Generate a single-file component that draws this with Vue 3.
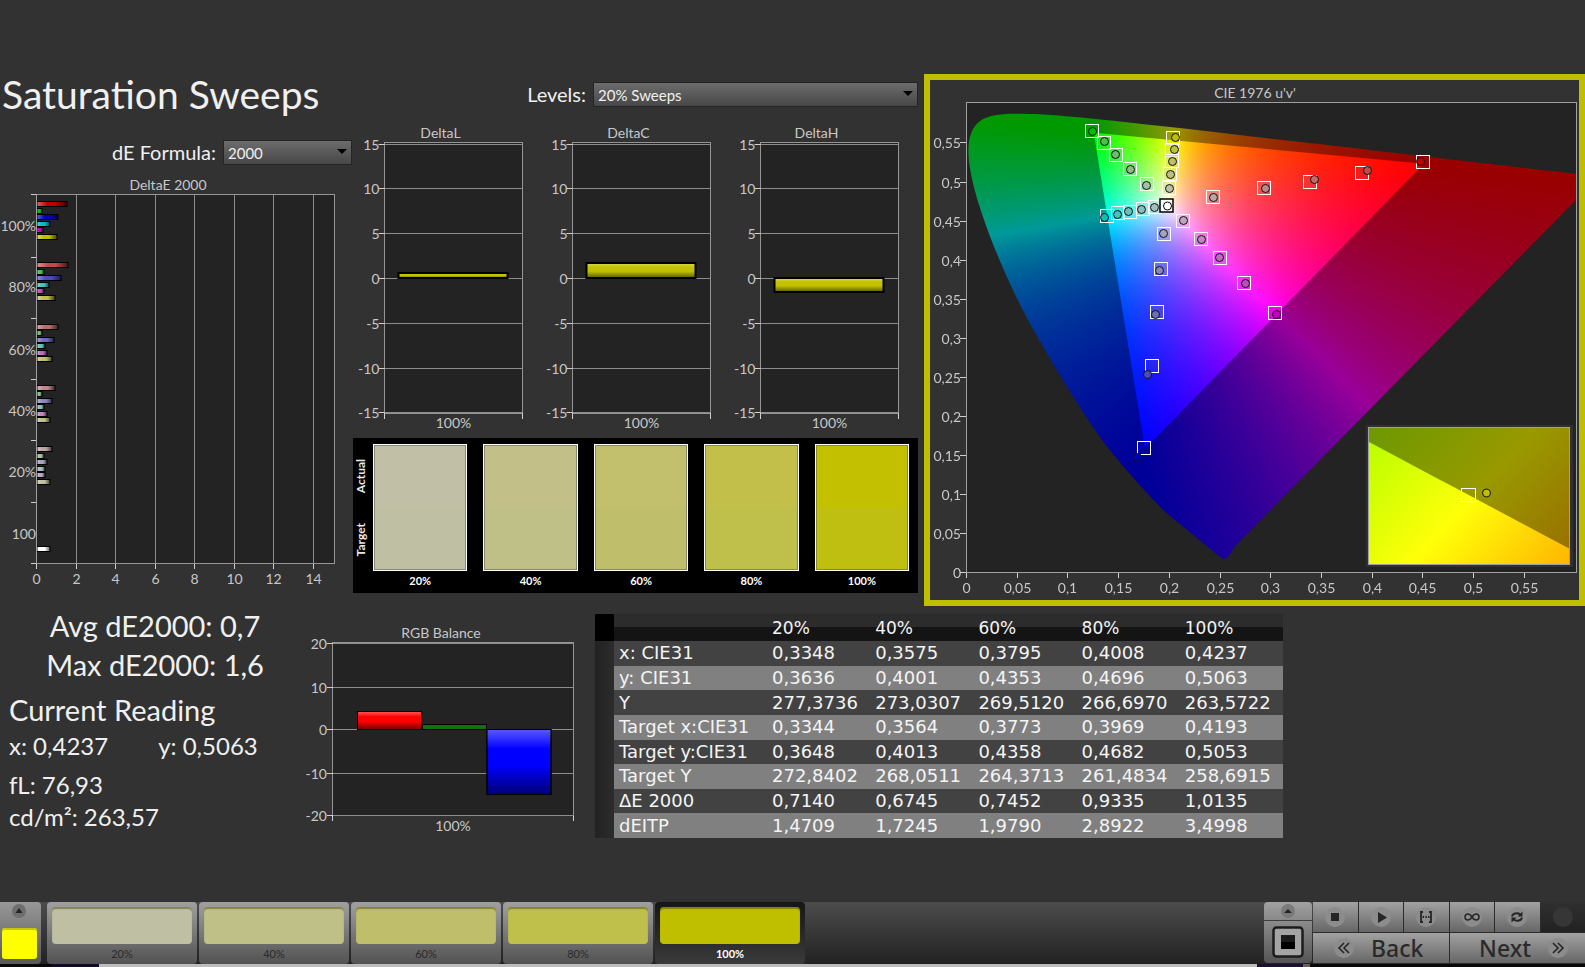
<script setup>
import { onMounted, ref } from 'vue'

const formula = ref('2000')
const level = ref('20% Sweeps')
const selected = ref('100%')
const canvas = ref(null)

// Saturation steps, from weakest to full: the low channel falls while the high one stays at 0xbf.
const low = ['a4', '88', '6b', '4b', '00']
const actualColors = ['#c1bfa6', '#c2bf88', '#c2c06c', '#c2c04b', '#c2c000']
const targetColors = ['#bfbfa4', '#bfbf88', '#bfbf6b', '#bfbf4b', '#bfbf12']
const steps = ['20%', '40%', '60%', '80%', '100%']
const swatches = steps.map((label, i) => ({
  label,
  bg: `linear-gradient(${actualColors[i]} 50%, ${targetColors[i]} 50%)`
}))
const tiles = steps.map((label, i) => ({ label, color: `#bfbf${low[i]}` }))

function hueColor(hue, i) {
  const l = low[i]
  return {
    r: `#bf${l}${l}`, g: `#${l}bf${l}`, b: `#${l}${l}bf`,
    c: `#${l}bfbf`, m: `#bf${l}bf`, y: `#bfbf${l}`
  }[hue]
}

// Delta E bars
const order = ['r', 'g', 'b', 'c', 'm', 'y']
const barEnds = [
  [67, 42, 58, 50, 43, 57],
  [68, 44, 61, 49, 44, 55],
  [58, 42, 54, 45, 47, 52],
  [55, 42, 52, 44, 47, 50],
  [52, 44, 47, 45, 45, 50]
]
const deBars = barEnds.flatMap((ends, g) =>
  ends.map((end, k) => ({
    y: Math.round(201 + g * 61.25 + k * 6.5) + 0.5,
    w: end - 37,
    fill: hueColor(order[k], 4 - g)
  }))
)
deBars.push({ y: 546.5, w: 13, fill: '#ffffff' })
const deTicks = [194, 257, 318, 379, 440, 502, 563]
const deRows = [['100%', 226], ['80%', 287], ['60%', 350], ['40%', 411], ['20%', 472], ['100', 534]]
const deCols = [0, 2, 4, 6, 8, 10, 12, 14].map(v => ({ v, x: 36.5 + Math.round(v * 19.75) }))

// Delta L / C / H
const deltaCharts = [
  { name: 'DeltaL', x: 384.5, y: 273, h: 5 },
  { name: 'DeltaC', x: 572.5, y: 263, h: 15 },
  { name: 'DeltaH', x: 760.5, y: 278, h: 14 }
]
const deltaTicks = [[15, 144.5], [10, 188.5], [5, 233.5], [0, 278.5], [-5, 323.5], [-10, 368.5], [-15, 412.5]]
const rgbTicks = [[20, 643.5], [10, 687.5], [0, 729.5], [-10, 773.5], [-20, 815.5]]

// Chromaticity markers: hue, step, target x/y, measured x/y
const markers = [
  ['g', 4, 1092, 131, 1092, 131], ['g', 3, 1104, 143, 1104, 141], ['g', 2, 1116, 155, 1115, 154],
  ['g', 1, 1130, 169, 1130, 169], ['g', 0, 1147, 184, 1146, 185],
  ['y', 4, 1173, 138, 1175, 137], ['y', 3, 1172, 150, 1174, 149], ['y', 2, 1172, 161, 1172, 161],
  ['y', 1, 1170, 174, 1170, 174], ['y', 0, 1169, 188, 1169, 188],
  ['c', 4, 1107, 216, 1104, 217], ['c', 3, 1118, 213, 1117, 214], ['c', 2, 1130, 212, 1128, 211],
  ['c', 1, 1143, 209, 1141, 209], ['c', 0, 1155, 207, 1154, 207],
  ['b', 0, 1164, 234, 1163, 233], ['b', 1, 1161, 269, 1159, 270], ['b', 2, 1157, 312, 1155, 314],
  ['b', 3, 1152, 366, 1147, 374], ['b', 4, 1144, 448, 1137, 457],
  ['m', 0, 1183, 221, 1183, 220], ['m', 1, 1201, 239, 1201, 239], ['m', 2, 1220, 258, 1219, 257],
  ['m', 3, 1244, 283, 1245, 283], ['m', 4, 1275, 313, 1276, 314],
  ['r', 0, 1213, 197, 1213, 197], ['r', 1, 1264, 188, 1265, 188], ['r', 2, 1310, 182, 1314, 179],
  ['r', 3, 1362, 173, 1367, 170], ['r', 4, 1423, 162, 1420, 161]
].map(([h, s, tx, ty, ax, ay]) => ({ fill: hueColor(h, s), tx, ty, ax, ay }))

const vTicks = Array.from({ length: 12 }, (_, i) => ({
  label: String(i * 5 / 100).replace('.', ','), y: Math.round(572 - i * 39.05) + 0.5
}))
const uTicks = Array.from({ length: 12 }, (_, i) => ({
  label: String(i * 5 / 100).replace('.', ','), x: Math.round(966 + i * 50.7) + 0.5
}))

const rows = [
  ['x: CIE31', '0,3348', '0,3575', '0,3795', '0,4008', '0,4237'],
  ['y: CIE31', '0,3636', '0,4001', '0,4353', '0,4696', '0,5063'],
  ['Y', '277,3736', '273,0307', '269,5120', '266,6970', '263,5722'],
  ['Target x:CIE31', '0,3344', '0,3564', '0,3773', '0,3969', '0,4193'],
  ['Target y:CIE31', '0,3648', '0,4013', '0,4358', '0,4682', '0,5053'],
  ['Target Y', '272,8402', '268,0511', '264,3713', '261,4834', '258,6915'],
  ['ΔE 2000', '0,7140', '0,6745', '0,7452', '0,9335', '1,0135'],
  ['dEITP', '1,4709', '1,7245', '1,9790', '2,8922', '3,4998']
]

// Spectral locus, CIE 1931 x,y
const locus = [
  [.1714, .0051], [.1644, .0109], [.1566, .0177], [.144, .0297],
  [.1241, .0578], [.1096, .0868], [.0913, .1327], [.0687, .2007], [.0454, .295], [.0235, .4127],
  [.0082, .5384], [.0039, .6548], [.0139, .7502], [.0389, .812], [.0743, .8338], [.1142, .8262],
  [.1547, .8059], [.2296, .7543], [.3016, .6923], [.3731, .6245], [.4441, .5547], [.5125, .4866],
  [.5752, .4242], [.627, .3725], [.6658, .334], [.6915, .3083], [.719, .2809], [.7347, .2653]
]
const gamut = [[.64, .33], [.3, .6], [.15, .06]]
const W = 610
const H = 469
const SX = 1014
const SY = 781

function toPlot([x, y]) {
  const d = -2 * x + 12 * y + 3
  return [(4 * x / d) * SX, H - (9 * y / d) * SY]
}

function colorLayer(scale) {
  const layer = document.createElement('canvas')
  layer.width = W
  layer.height = H
  const g = layer.getContext('2d')
  const img = g.createImageData(W, H)
  for (let j = 0; j < H; j++) {
    for (let i = 0; i < W; i++) {
      const u = (i + 0.5) / SX
      const v = Math.max((H - j - 0.5) / SY, 0.001)
      const X = 9 * u / (4 * v)
      const Z = (12 - 3 * u - 20 * v) / (4 * v)
      const rgb = [
        3.2406 * X - 1.5372 - 0.4986 * Z,
        -0.9689 * X + 1.8758 + 0.0415 * Z,
        0.0557 * X - 0.204 + 1.057 * Z
      ].map(c => Math.max(c, 0))
      const top = Math.max(...rgb) || 1
      const o = (j * W + i) * 4
      rgb.forEach((c, k) => { img.data[o + k] = 255 * scale * c / top })
      img.data[o + 3] = 255
    }
  }
  g.putImageData(img, 0, 0)
  return layer
}

onMounted(() => {
  const g = canvas.value.getContext('2d')
  const pts = locus.map(toPlot)
  const n = pts.length
  const first = pts[0]
  const last = pts[n - 1]
  g.save()
  g.beginPath()
  g.moveTo(...first)
  // Catmull-Rom spline through the locus points
  for (let i = 0; i < n - 1; i++) {
    const p0 = pts[Math.max(i - 1, 0)]
    const p1 = pts[i]
    const p2 = pts[i + 1]
    const p3 = pts[Math.min(i + 2, n - 1)]
    g.bezierCurveTo(
      p1[0] + (p2[0] - p0[0]) / 6, p1[1] + (p2[1] - p0[1]) / 6,
      p2[0] - (p3[0] - p1[0]) / 6, p2[1] - (p3[1] - p1[1]) / 6,
      ...p2
    )
  }
  const near = [first[0] + (last[0] - first[0]) * 0.03, first[1] + (last[1] - first[1]) * 0.03]
  g.lineTo(...near)
  g.quadraticCurveTo(first[0] + 5, first[1] + 2, ...first)
  g.closePath()
  g.clip()
  g.drawImage(colorLayer(0.6), 0, 0)
  g.restore()
  g.beginPath()
  gamut.map(toPlot).forEach(p => g.lineTo(...p))
  g.closePath()
  g.clip()
  g.drawImage(colorLayer(1), 0, 0)
})
</script>

<template>
  <div class="page">
    <main>
      <div class="upper">
        <section>
          <h1>Saturation Sweeps</h1>
          <div class="field formula">
            <label for="formula">dE Formula:</label>
            <span class="select"><select id="formula" v-model="formula"><option>2000</option></select></span>
          </div>
          <svg class="chart" viewBox="0 172 353 434">
            <defs>
              <linearGradient id="shadeX"><stop offset="0" stop-color="#fff" stop-opacity=".4" /><stop offset=".35" stop-color="#fff" stop-opacity="0" /><stop offset=".6" stop-opacity="0" /><stop offset="1" stop-opacity=".65" /></linearGradient>
            </defs>
            <text x="168" y="190" text-anchor="middle">DeltaE 2000</text>
            <rect x="36.5" y="194.5" width="298" height="369" class="plot" />
            <path v-for="c in deCols.slice(1)" :key="c.v" :d="`M${c.x} 195V563`" class="grid" />
            <path v-for="c in deCols" :key="'t' + c.v" :d="`M${c.x} 564v5`" class="tick" />
            <path v-for="t in deTicks" :key="t" :d="`M31 ${t + 0.5}h5`" class="tick" />
            <g v-for="(b, i) in deBars" :key="i">
              <rect x="37" :y="b.y" :width="b.w" height="5" :fill="b.fill" />
              <rect x="37" :y="b.y" :width="b.w" height="5" fill="url(#shadeX)" stroke="#000" />
            </g>
            <path d="M36.5 194V564" class="frame" />
            <text v-for="r in deRows" :key="r[1]" x="36" :y="r[1] + 5" text-anchor="end">{{ r[0] }}</text>
            <text v-for="c in deCols" :key="'l' + c.v" :x="c.x" y="584" text-anchor="middle">{{ c.v }}</text>
          </svg>
        </section>

        <section class="middle">
          <div class="field levels">
            <label for="levels">Levels:</label>
            <span class="select wide"><select id="levels" v-model="level"><option>20% Sweeps</option></select></span>
          </div>
          <svg class="chart" viewBox="353 120 565 318">
            <defs>
              <linearGradient id="shadeY" x2="0" y2="1"><stop offset="0" stop-color="#fff" stop-opacity=".35" /><stop offset=".3" stop-color="#fff" stop-opacity="0" /><stop offset=".55" stop-opacity="0" /><stop offset="1" stop-opacity=".55" /></linearGradient>
            </defs>
            <g v-for="d in deltaCharts" :key="d.name">
              <text :x="d.x + 56" y="138" text-anchor="middle">{{ d.name }}</text>
              <rect :x="d.x" y="142.5" width="138" height="271" class="plot" />
              <g v-for="t in deltaTicks" :key="t[0]">
                <path :d="`M${d.x} ${t[1]}h138`" class="grid" />
                <path :d="`M${d.x - 6} ${t[1]}h6`" class="tick" />
                <text :x="d.x - 5" :y="t[1] + 5" text-anchor="end">{{ t[0] }}</text>
              </g>
              <path :d="`M${d.x} 413v6M${d.x + 138} 413v6`" class="tick" />
              <rect :x="d.x + 14" :y="d.y" width="109" :height="d.h" fill="#c2c200" />
              <rect :x="d.x + 14" :y="d.y" width="109" :height="d.h" fill="url(#shadeY)" stroke="#000" stroke-width="2" />
              <text :x="d.x + 69" y="428" text-anchor="middle">100%</text>
            </g>
          </svg>
          <div class="compare">
            <div class="sides"><span>Actual</span><span>Target</span></div>
            <figure v-for="s in swatches" :key="s.label">
              <div class="patch" :style="{ background: s.bg }"></div>
              <figcaption>{{ s.label }}</figcaption>
            </figure>
          </div>
        </section>

        <section class="cie">
          <svg class="chart" viewBox="930 80 649 520">
            <defs>
              <linearGradient id="lit" gradientUnits="userSpaceOnUse" x1="1369" y1="428" x2="1551" y2="596"><stop offset="0" stop-color="#b4ff00" /><stop offset=".5" stop-color="#ffff08" /><stop offset="1" stop-color="#ffb000" /></linearGradient>
              <linearGradient id="dim" gradientUnits="userSpaceOnUse" x1="1369" y1="428" x2="1551" y2="596"><stop offset="0" stop-color="#6c9900" /><stop offset=".5" stop-color="#999900" /><stop offset="1" stop-color="#996a00" /></linearGradient>
            </defs>
            <text x="1255" y="98" text-anchor="middle">CIE 1976 u'v'</text>
            <rect x="966.5" y="102.5" width="610" height="470" class="plot" />
            <foreignObject x="967" y="103" width="610" height="469">
              <canvas ref="canvas" width="610" height="469"></canvas>
            </foreignObject>
            <rect x="966.5" y="102.5" width="610" height="470" class="frame" />
            <g v-for="t in vTicks" :key="'v' + t.label">
              <path :d="`M960 ${t.y}h6`" class="tick" />
              <text x="961" :y="t.y + 5" text-anchor="end">{{ t.label }}</text>
            </g>
            <g v-for="t in uTicks" :key="'u' + t.label">
              <path :d="`M${t.x} 573v5`" class="tick" />
              <text :x="t.x" y="593" text-anchor="middle">{{ t.label }}</text>
            </g>
            <g v-for="(m, i) in markers" :key="i">
              <rect :x="m.tx - 6.5" :y="m.ty - 6.5" width="13" height="13" :fill="m.fill" fill-opacity=".25" stroke="#fff" />
            </g>
            <circle v-for="(m, i) in markers" :key="'c' + i" :cx="m.ax + 0.5" :cy="m.ay + 0.5" r="4" :fill="m.fill" stroke="#111" />
            <rect x="1160" y="199" width="13" height="13" fill="#fff" stroke="#000" stroke-width="1.5" />
            <circle cx="1167.5" cy="206" r="4" fill="#fff" stroke="#000" />
            <rect x="1366" y="425" width="207" height="142" fill="#303030" />
            <rect x="1369" y="428" width="201" height="137" fill="url(#dim)" />
            <path d="M1369 442L1570 549V565H1369Z" fill="url(#lit)" />
            <rect x="1368.5" y="427.5" width="201" height="137" class="frame" />
            <rect x="1461.5" y="488.5" width="14" height="13" fill="none" stroke="#fff" />
            <circle cx="1486.5" cy="493" r="4" fill="#bfbf00" stroke="#111" />
          </svg>
        </section>
      </div>

      <div class="lower">
        <section class="stats">
          <p class="big center">Avg dE2000: 0,7</p>
          <p class="big center">Max dE2000: 1,6</p>
          <h2 class="big">Current Reading</h2>
          <p class="xy"><span>x: 0,4237</span><span>y: 0,5063</span></p>
          <p class="fl">fL: 76,93</p>
          <p>cd/m²: 263,57</p>
        </section>
        <svg class="chart" viewBox="300 606 280 240">
          <text x="441" y="638" text-anchor="middle">RGB Balance</text>
          <rect x="332.5" y="642.5" width="241" height="173" class="plot" />
          <g v-for="t in rgbTicks" :key="t[0]">
            <path :d="`M332.5 ${t[1]}h241`" class="grid" />
            <path :d="`M327 ${t[1]}h6`" class="tick" />
            <text x="327" :y="t[1] + 5" text-anchor="end">{{ t[0] }}</text>
          </g>
          <path d="M332.5 816v5M573.5 816v5" class="tick" />
          <g stroke="#000">
            <rect x="357.5" y="711.5" width="64" height="18" fill="#f00" />
            <rect x="357.5" y="711.5" width="64" height="18" fill="url(#shadeY)" />
            <rect x="422.5" y="724.5" width="64" height="5" fill="#127012" />
            <rect x="487" y="729.5" width="64" height="65" fill="#00f" />
            <rect x="487" y="729.5" width="64" height="65" fill="url(#shadeY)" />
          </g>
          <text x="453" y="831" text-anchor="middle">100%</text>
        </svg>
        <div class="tablebox">
          <table>
            <thead>
              <tr><th class="gutter"></th><th class="name"></th><th v-for="s in steps" :key="s" scope="col">{{ s }}</th></tr>
            </thead>
            <tbody>
              <tr v-for="r in rows" :key="r[0]">
                <td class="gutter"></td>
                <th scope="row">{{ r[0] }}</th>
                <td v-for="(c, i) in r.slice(1)" :key="i">{{ c }}</td>
              </tr>
            </tbody>
          </table>
        </div>
      </div>
    </main>

    <footer>
      <div class="bar">
        <button class="current" aria-label="Show patterns">
          <svg width="16" height="16" viewBox="0 0 16 16"><circle cx="8" cy="8" r="7" fill="#6e6e6e" /><path d="M4.500 10L8 5l3.500 5z" fill="#222" /></svg>
          <span class="chip"></span>
        </button>
        <div class="tiles">
          <button v-for="t in tiles" :key="t.label" class="tile" :class="{ on: selected === t.label }" @click="selected = t.label">
            <span class="color" :style="{ background: t.color }"></span>
            <span>{{ t.label }}</span>
          </button>
        </div>
        <div class="side">
          <button class="up" aria-label="Expand"><svg width="16" height="16" viewBox="0 0 16 16"><circle cx="8" cy="8" r="7" fill="#7a7a7a" /><path d="M4 10l4-4 4 4z" fill="#222" /></svg></button>
          <button class="view" aria-label="Window">
            <svg width="32" height="32" viewBox="0 0 32 32"><rect x="1.500" y="1.500" width="29" height="29" rx="3" fill="#a4a4a4" stroke="#1c1c1c" stroke-width="2.500" /><rect x="9" y="9" width="14" height="7" fill="#1c1c1c" /><rect x="9" y="16" width="14" height="7" fill="#000" /></svg>
          </button>
        </div>
        <div class="controls">
          <button aria-label="Stop"><svg class="ico" viewBox="0 0 22 22"><circle cx="11" cy="11" r="10" /><path d="M7 7h8v8H7z" fill="#262626" /></svg></button>
          <button aria-label="Play"><svg class="ico" viewBox="0 0 22 22"><circle cx="11" cy="11" r="10" /><path d="M8 6l9 5.500L8 17z" fill="#262626" /></svg></button>
          <button aria-label="Range"><svg class="ico" viewBox="0 0 22 22"><circle cx="11" cy="11" r="10" /><path d="M8 6H6v10h2M14 6h2v10h-2" fill="none" stroke="#262626" stroke-width="1.800" /><path d="M7.500 11h1.500M10.300 11h1.500M13 11h1.500" stroke="#262626" stroke-width="1.800" /></svg></button>
          <button aria-label="Loop"><svg class="ico" viewBox="0 0 22 22"><circle cx="11" cy="11" r="10" /><path d="M11 11C9.500 8.500 8.300 8 7 8a3 3 0 0 0 0 6c1.300 0 2.500-.5 4-3s2.700-3 4-3a3 3 0 0 1 0 6c-1.300 0-2.500-.5-4-3z" fill="none" stroke="#262626" stroke-width="1.500" /></svg></button>
          <button aria-label="Refresh"><svg class="ico" viewBox="0 0 22 22"><circle cx="11" cy="11" r="10" /><path d="M6 10.500C6.500 7.500 11 6 14.500 8.500M16 11.500c-.5 3-5 4.500-8.500 2" fill="none" stroke="#262626" stroke-width="2" /><path d="M16.500 5.500v5h-5zM5.500 16.500v-5h5z" fill="#262626" /></svg></button>
          <button class="off" disabled aria-label="Record"><svg class="ico" viewBox="0 0 22 22"><circle cx="11" cy="11" r="10" /></svg></button>
          <button class="nav back"><svg class="ico" viewBox="0 0 22 22"><circle cx="11" cy="11" r="10" /><path d="M11 6l-5 5 5 5M16 6l-5 5 5 5" fill="none" stroke="#262626" stroke-width="1.600" /></svg>Back</button>
          <button class="nav next">Next<svg class="ico" viewBox="0 0 22 22"><circle cx="11" cy="11" r="10" /><path d="M6 6l5 5-5 5M11 6l5 5-5 5" fill="none" stroke="#262626" stroke-width="1.600" /></svg></button>
        </div>
      </div>
      <div class="edge"><i></i><i></i><i></i><i></i><i></i><i></i></div>
    </footer>
  </div>
</template>

<style>
body { background: #323232; }
</style>

<style scoped>
.page { min-height: 100vh; display: flex; flex-direction: column; box-sizing: border-box; padding-top: 74px; background: #323232; color: #f0f0f0; font-family: Lato, "Open Sans", sans-serif; overflow: hidden; }
.page * { box-sizing: border-box; }
h1, h2, p, figure { margin: 0; font-weight: 400; }
button { border: 0; margin: 0; padding: 0; font-family: inherit; color: #2a2a2a; }
.upper { display: grid; grid-template-columns: minmax(0, 353fr) minmax(0, 571fr) minmax(0, 661fr); align-items: start; }
.middle { padding-right: 6px; }
h1 { font-size: 39px; line-height: 40px; padding-left: 2px; white-space: nowrap; }
.chart { display: block; width: 100%; height: auto; }
.chart text { font-size: 14px; fill: #c8c8c8; }
.plot { fill: #232323; stroke: #959595; }
.frame { fill: none; stroke: #a0a0a0; }
.grid { stroke: #8c8c8c; fill: none; }
.tick { stroke: #d0d0d0; fill: none; }
canvas { display: block; width: 610px; height: 469px; }

.field { display: flex; justify-content: flex-end; align-items: center; gap: 7px; height: 25px; font-size: 20px; line-height: 24px; }
.formula { margin: 25px 0 8px; padding-right: 1px; }
.levels { margin: 7px 0 14px; }
.select { position: relative; width: 129px; height: 25px; }
.select.wide { width: 325px; }
.select::after { content: ""; position: absolute; right: 5px; top: 10px; border: 5px solid transparent; border-top-color: #000; border-bottom: 0; pointer-events: none; }
select { appearance: none; width: 100%; height: 100%; margin: 0; padding: 2px 4px 0; border: 1px solid #242424; border-radius: 0; background: linear-gradient(#6c6c6c, #474747); color: #f0f0f0; font-family: inherit; font-size: 15px; }

.compare { display: flex; gap: 16px; background: #000; padding: 6px 9px 0 0; height: 155px; }
.sides { width: 20px; margin-right: -16px; padding-right: 4px; display: flex; flex-direction: column; justify-content: space-around; align-items: center; height: 127px; font-size: 12px; line-height: 16px; font-weight: 700; color: #e8e8e8; }
.sides span { writing-mode: vertical-rl; transform: rotate(180deg); }
figure { flex: 1; text-align: center; }
.patch { height: 127px; border: 1px solid #fff; box-shadow: inset 0 0 0 1px rgba(80, 80, 80, 0.5); }
figcaption { font-size: 11px; font-weight: 700; line-height: 20px; color: #fff; }

.cie { border: 6px solid #bfbf00; }

.lower { display: grid; grid-template-columns: minmax(0, 300fr) minmax(0, 280fr) minmax(0, 703fr) minmax(0, 302fr); align-items: start; }
.stats { padding-left: 9px; font-size: 24px; line-height: 32px; white-space: nowrap; }
.big { font-size: 29px; line-height: 39px; }
.center { width: 292px; text-align: center; }
h2.big { margin-top: 6px; }
.xy { display: flex; gap: 50px; margin-top: 1px; }
.fl { margin-top: 7px; }
.tablebox { padding: 8px 0 0 15px; }
table { width: 100%; height: 224px; border-collapse: collapse; table-layout: fixed; font-family: "DejaVu Sans", sans-serif; font-size: 18px; line-height: 20px; color: #f4f4f4; }
th, td { padding: 0 0 0 5px; text-align: left; font-weight: 400; white-space: nowrap; }
thead th { font-size: 17px; }
.gutter { width: 19px; padding: 0; background: linear-gradient(90deg, #222, #2c2c2c); }
.name { width: 153px; }
thead tr { height: 27px; background: linear-gradient(#2c2c2c 48%, #141414 50%); }
thead .gutter { background: #000; }
tbody tr { background: #424242; }
tbody tr:nth-child(even) { background: #808080; }

footer { margin-top: auto; }
.bar { display: flex; height: 62px; background: linear-gradient(#4c4c4c, #222); }
.current { width: 41px; display: flex; flex-direction: column; align-items: center; gap: 9px; padding: 1px 4px 0 1px; border-radius: 0 4px 4px 0; background: linear-gradient(#989898, #585858); }
.chip { width: 35px; height: 31px; border-radius: 3px; background: #ff0; box-shadow: inset 0 2px 0 #c8c800; }
.tiles { flex: 1; display: flex; gap: 2px; padding-left: 6px; }
.tile { flex: 0 1 150px; display: flex; flex-direction: column; align-items: stretch; padding: 5px 5px 0; border-radius: 4px; background: linear-gradient(#a0a0a0, #525252); font-size: 11px; line-height: 20px; }
.color { height: 37px; border-radius: 4px; box-shadow: inset 0 2px 1px rgba(60, 60, 0, 0.45); }
.on { background: linear-gradient(#161616, #3a3a3a); color: #fff; font-weight: 700; }
.side { width: 49px; display: flex; flex-direction: column; gap: 1px; padding-right: 1px; }
.side button { display: flex; justify-content: center; align-items: center; }
.up { height: 18px; background: linear-gradient(#a2a2a2, #888); border-radius: 4px 4px 0 0; }
.view { flex: 1; margin-bottom: 1px; background: linear-gradient(#8c8c8c, #555); border-radius: 0 0 4px 4px; }
.controls { width: 272px; display: grid; grid-template-columns: repeat(6, 1fr); grid-template-rows: 30px 30px; gap: 1px; background: #2c2c2c; }
.controls button { display: flex; justify-content: center; align-items: center; background: linear-gradient(#a2a2a2, #666); }
.controls .off { background: linear-gradient(#303030, #222); }
.controls .nav { grid-column: span 3; gap: 16px; font-family: "Noto Sans", "Open Sans", sans-serif; font-size: 23px; font-weight: 500; line-height: 30px; }
.controls .back { justify-content: flex-start; padding-left: 20px; }
.controls .next { justify-content: flex-end; padding-right: 16px; }
.ico { width: 22px; height: 22px; }
.ico circle { fill: #8c8c8c; }
.off circle { fill: #363636; }
.edge { display: flex; height: 3px; background: #0c0c0c; }
.edge i { flex: 52 1 0; background: #080808; }
.edge i:nth-child(2) { flex-grow: 47; background: #120a26; }
.edge i:nth-child(3) { flex-grow: 1158; background: #bcbcbc; }
.edge i:nth-child(4) { flex-grow: 46; background: #1b0f38; }
.edge i:nth-child(5) { flex-grow: 7; background: #6b625c; }
.edge i:nth-child(6) { flex-grow: 275; }
</style>
